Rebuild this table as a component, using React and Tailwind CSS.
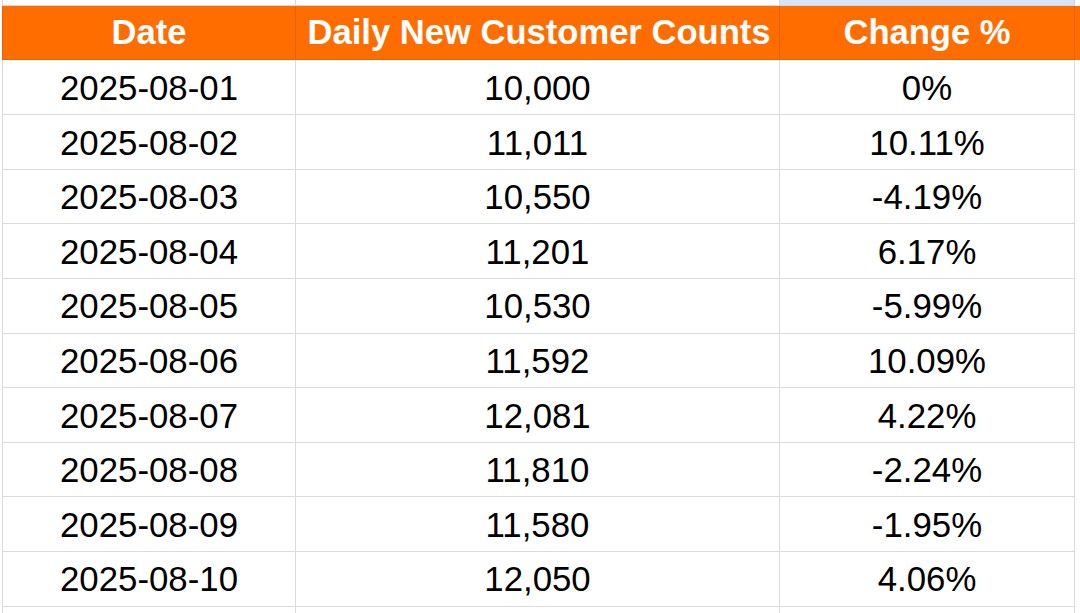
import React from 'react';

const rows = [
    ['2025-08-01', '10,000', '0%'],
    ['2025-08-02', '11,011', '10.11%'],
    ['2025-08-03', '10,550', '-4.19%'],
    ['2025-08-04', '11,201', '6.17%'],
    ['2025-08-05', '10,530', '-5.99%'],
    ['2025-08-06', '11,592', '10.09%'],
    ['2025-08-07', '12,081', '4.22%'],
    ['2025-08-08', '11,810', '-2.24%'],
    ['2025-08-09', '11,580', '-1.95%'],
    ['2025-08-10', '12,050', '4.06%'],
];

const App = () => {
    return (
        <div className="w-[1080px] h-[613px] overflow-hidden bg-white pl-[2px] text-black" style={{ fontFamily: '"Liberation Sans", Arial, sans-serif' }}>
            {/* row above the header, cut off */}
            <div className="grid grid-cols-[294px_484px_295px] h-[6px]">
                <div className="border-l border-r border-b border-[#d8d8d8] bg-white" />
                <div className="border-r border-b border-[#d8d8d8] bg-white" />
                <div className="border-r border-b border-[#c9d6ea] bg-[#d6e3f8]" />
            </div>

            {/* header */}
            <div className="grid grid-cols-[294px_484px_295px] h-[54px] bg-[#ff6d01] text-white font-bold text-[34.6px]">
                <div className="border-l border-r border-b border-[#e0620a] flex items-center justify-center pt-[1px]">Date</div>
                <div className="border-r border-b border-[#e0620a] flex items-center justify-center pl-[3px] pt-[1px]">Daily New Customer Counts</div>
                <div className="border-r border-b border-[#e0620a] flex items-center justify-center pt-[1px]">Change %</div>
            </div>

            {rows.map((r) => (
                <div key={r[0]} className="grid grid-cols-[294px_484px_295px] h-[54.6px] text-[34.8px]">
                    <div className="border-l border-r border-b border-[#dcdcdc] flex items-center justify-center pt-[2px]">{r[0]}</div>
                    <div className="border-r border-b border-[#dcdcdc] flex items-center justify-center pt-[2px]">{r[1]}</div>
                    <div className="border-r border-b border-[#dcdcdc] flex items-center justify-center pt-[2px]">{r[2]}</div>
                </div>
            ))}

            <div className="grid grid-cols-[294px_484px_295px] h-[20px]">
                <div className="border-l border-r border-[#dcdcdc]" />
                <div className="border-r border-[#dcdcdc]" />
                <div className="border-r border-[#dcdcdc]" />
            </div>
        </div>
    );
};

export default App;
